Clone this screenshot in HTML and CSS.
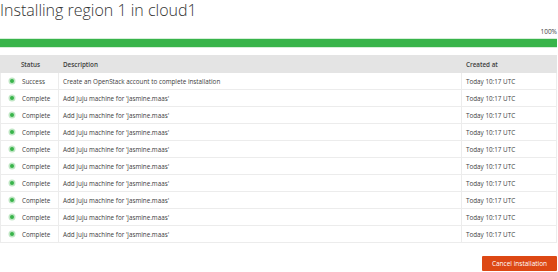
FILE: index.html
```html
<!DOCTYPE html>
<html lang="en">
<head>
    <meta charset="UTF-8">
    <title>Installing region 1 in cloud1</title>
    <link rel="stylesheet" href="styles.css">
</head>
<body>
    <div class="page">
        <h1>Installing region 1 in cloud1</h1>
        <div class="progress-label">100%</div>
        <div class="progress"><div class="progress-fill"></div></div>

        <table>
            <thead>
                <tr>
                    <th class="col-status">Status</th>
                    <th>Description</th>
                    <th class="col-date">Created at</th>
                </tr>
            </thead>
            <tbody id="rows">
                <tr>
                    <td class="col-status"><span class="dot"></span>Success</td>
                    <td>Create an OpenStack account to complete installation</td>
                    <td class="col-date">Today 10:17 UTC</td>
                </tr>
            </tbody>
        </table>

        <div class="actions">
            <button class="cancel">Cancel installation</button>
        </div>
    </div>

    <script>
        const rows = document.getElementById('rows');
        for (let i = 0; i < 9; i++) {
            const row = document.createElement('tr');
            row.innerHTML =
                `<td class="col-status"><span class="dot"></span>Complete</td>
                <td>Add Juju machine for 'jasmine.maas'</td>
                <td class="col-date">Today 10:17 UTC</td>`;
            rows.appendChild(row);
        }
    </script>
</body>
</html>
```

FILE: styles.css
```css
body {
    margin: 0;
    font-family: 'Open Sans', 'Noto Sans', sans-serif;
    color: #3d3d3d;
    background: #ffffff;
}

.page {
    padding: 0 1px 0 0;
}

h1 {
    margin: 0;
    font-size: 16px;
    font-weight: 300;
    line-height: 20px;
    color: #333333;
}

.progress-label {
    margin-top: 7px;
    text-align: right;
    font-size: 6.5px;
    line-height: 9px;
}

.progress {
    height: 10px;
    margin-top: 2px;
    background: #d5efd9;
    padding: 1px 0;
    box-sizing: border-box;
}

.progress-fill {
    height: 100%;
    width: 100%;
    background: #38b44a;
}

table {
    width: 557px;
    margin-top: 7px;
    border-collapse: collapse;
    font-size: 6.3px;
}

th, td {
    height: 17px;
    padding: 0 4px;
    text-align: left;
    border: 1px solid #ececec;
    box-sizing: border-box;
}

th {
    background: #e4e4e4;
    font-weight: 600;
    border-color: #e4e4e4;
}

th.col-status {
    text-align: center;
    padding-left: 6px;
}

.col-status {
    width: 58px;
    white-space: nowrap;
}

td.col-status {
    padding-left: 9px;
}

.col-date {
    width: 95px;
}

.dot {
    display: inline-block;
    width: 4px;
    height: 4px;
    border-radius: 50%;
    background: #38b44a;
    box-shadow: 0 0 0 1.5px #bfe6c4;
    margin-right: 8px;
    vertical-align: middle;
    position: relative;
    top: -1px;
}

.actions {
    display: flex;
    justify-content: flex-end;
    margin-top: 13px;
}

.cancel {
    width: 75px;
    height: 15px;
    padding: 0;
    border: none;
    border-radius: 1px;
    background: #dd4814;
    color: #ffffff;
    font-family: inherit;
    font-size: 6.5px;
}
```
